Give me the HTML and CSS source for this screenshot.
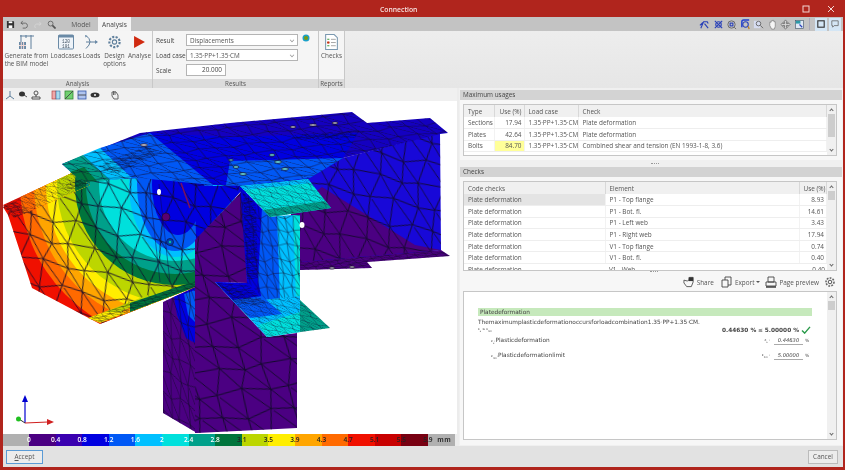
FILE: index.html
```html
<!DOCTYPE html>
<html lang="en">
<head>
<meta charset="utf-8">
<title>Connection</title>
<link rel="stylesheet" href="styles.css">
</head>
<body>
<div class="window">
  <header class="titlebar">
    <span class="title">Connection</span>
    <span class="winbtns">
      <svg class="wb" viewBox="0 0 8 8"><rect x="1" y="1" width="6" height="6" class="ln-w"/></svg>
      <svg class="wb" viewBox="0 0 8 8"><path d="M1 1L7 7M7 1L1 7" class="ln-w"/></svg>
    </span>
  </header>

  <nav class="tabbar">
    <div class="qat">
      <svg class="qi" viewBox="0 0 10 10"><path d="M1 1H8L9 2V9H1Z" class="f-dark"/><rect x="3" y="1.500" width="4" height="2" class="f-white"/><rect x="3" y="6" width="4" height="3" class="f-white"/></svg>
      <svg class="qi" viewBox="0 0 10 10"><path d="M3 1L1 3.500L3.500 5M1.500 3.500H6A2.800 2.800 0 0 1 6 9H3" class="ln-g"/></svg>
      <svg class="qi qi-off" viewBox="0 0 10 10"><path d="M7 2L9 4.500L6.500 6M8.500 4.500H4A2.500 2.500 0 0 0 3 9" class="ln-l"/></svg>
      <svg class="qi" viewBox="0 0 10 10"><circle cx="4" cy="4" r="2.700" class="ln-g"/><path d="M6 6L9.500 9.500" class="ln-g2"/></svg>
    </div>
    <span class="tab tab-model">Model</span>
    <span class="tab tab-active">Analysis</span>
    <div class="viewtools">
      <svg class="vi" viewBox="0 0 12 12"><path d="M2 10L5 3H9L10 5M1 7L4 4M6 5L10 10" class="ln-blue"/></svg>
      <svg class="vi" viewBox="0 0 12 12"><circle cx="6" cy="6" r="3" class="ln-blue"/><path d="M2 2L10 10M10 2L2 10" class="ln-blue"/></svg>
      <svg class="vi" viewBox="0 0 12 12"><circle cx="6" cy="6" r="4" class="ln-g"/><rect x="4.500" y="4.500" width="3" height="3" class="ln-blue"/><path d="M9 9L11 11" class="ln-g"/></svg>
      <svg class="vi" viewBox="0 0 12 12"><path d="M2 9V3A2 2 0 0 1 4 1H10" class="ln-blue2"/><circle cx="6" cy="6" r="3" class="ln-blue"/><path d="M9 8L10 11" class="ln-orange"/></svg>
      <svg class="vi" viewBox="0 0 12 12"><rect x="1" y="2" width="7" height="8" class="f-pale"/><circle cx="6" cy="5" r="2.500" class="ln-g"/><path d="M8 7L11 10" class="ln-g"/></svg>
      <svg class="vi" viewBox="0 0 12 12"><path d="M3 7V3.500H4.500V2H6V1.500H7.500V3H9V8L8 11H5Z" class="hand"/></svg>
      <svg class="vi" viewBox="0 0 12 12"><path d="M6 1L8 3.500H7V5H9V4L11 6L9 8V7H7V9H8L6 11L4 9H5V7H3V8L1 6L3 4V5H5V3.500H4Z" class="f-graystroke"/></svg>
      <svg class="vi" viewBox="0 0 12 12"><rect x="1.500" y="1.500" width="9" height="9" class="f-paleblue"/><rect x="2" y="2" width="5" height="3" class="f-teal"/><path d="M6 6L9 9" class="ln-blue"/></svg>
      <i class="vsep"></i>
      <span class="vbtn"><svg class="vbi" viewBox="0 0 10 10"><rect x="1" y="1" width="8" height="8" class="ln-d2"/></svg></span>
      <span class="vbtn"><svg class="vbi" viewBox="0 0 10 10"><path d="M1 1H9V7H4L2 9V7H1Z" class="ln-g"/></svg></span>
    </div>
  </nav>

  <section class="ribbon">
    <div class="rgroup rg-analysis">
      <div class="rbody">
        <div class="rbtn rb-gen">
          <svg class="ri ri-gen" viewBox="0 0 18 16"><path d="M2 2H16M3 1V15M13 1V15M8 1V4" class="ln-steel"/><rect x="1" y="8" width="7" height="7" class="f-steel"/><path d="M3.300 8V15M5.600 8V15M1 11.500H8" class="ln-w"/></svg>
          <span>Generate from<br>the BIM model</span>
        </div>
        <div class="rbtn rb-lc">
          <svg class="ri ri-lc" viewBox="0 0 16 15"><rect x="0.500" y="0.500" width="15" height="14" rx="1" class="f-calendar"/><rect x="0.500" y="0.500" width="15" height="2.500" class="f-steel"/><text x="8" y="8" class="calnum">120</text><text x="8" y="13" class="calnum">181</text></svg>
          <span>Loadcases</span>
        </div>
        <div class="rbtn rb-loads">
          <svg class="ri ri-loads" viewBox="0 0 15 15"><path d="M2 1Q10 7 2 14M2 7.500H13" class="ln-steel"/><path d="M11 5.500L14 7.500L11 9.500Z" class="f-steel"/><path d="M1 0.500L3.500 1.500L1.500 3Z" class="f-steel"/></svg>
          <span>Loads</span>
        </div>
        <div class="rbtn rb-opt">
          <svg class="ri ri-opt" viewBox="0 0 14 14"><circle cx="7" cy="7" r="4.800" class="gear"/><circle cx="7" cy="7" r="2" class="ln-steel"/></svg>
          <span>Design<br>options</span>
        </div>
        <div class="rbtn rb-an">
          <svg class="ri ri-an" viewBox="0 0 10 11"><path d="M0 0L10 5.500L0 11Z" class="f-red"/></svg>
          <span>Analyse</span>
        </div>
      </div>
      <div class="rlabel">Analysis</div>
    </div>
    <div class="rgroup rg-results">
      <div class="rbody rform">
        <div class="frow frow-1">
          <label class="flab">Result</label>
          <span class="select">Displacements<i class="caret caret-box"></i></span>
          <svg class="status" viewBox="0 0 8 8"><circle cx="4" cy="4" r="3.500" class="f-tealb"/><circle cx="4" cy="4" r="2" class="f-yellow"/></svg>
        </div>
        <div class="frow">
          <label class="flab">Load case</label>
          <span class="select">1.35·PP+1.35·CM<i class="caret"></i></span>
        </div>
        <div class="frow">
          <label class="flab">Scale</label>
          <span class="input">20.000</span>
        </div>
      </div>
      <div class="rlabel">Results</div>
    </div>
    <div class="rgroup rg-reports">
      <div class="rbody">
        <div class="rbtn rb-checks">
          <svg class="ri ri-checks" viewBox="0 0 12 15"><path d="M0.500 0.500H8.500L11.500 3.500V14.500H0.500Z" class="f-doc"/><path d="M2 5H4M2 8H4M2 11H4" class="ln-green"/><path d="M5.500 5H10M5.500 8H10M5.500 11H10" class="ln-g3"/><rect x="2" y="7" width="2" height="2" class="f-red"/></svg>
          <span>Checks</span>
        </div>
      </div>
      <div class="rlabel">Reports</div>
    </div>
    <div class="rrest"></div>
  </section>

  <main class="main">
    <div class="leftcol">
      <div class="viewbar">
        <svg class="vb" viewBox="0 0 10 10"><path d="M5 1V6L1 9M5 6L9 9" class="ln-steel"/></svg>
        <svg class="vb" viewBox="0 0 10 10"><ellipse cx="4" cy="4" rx="3" ry="2.500" class="f-dark"/><path d="M6 5L9 7" class="ln-d"/></svg>
        <svg class="vb" viewBox="0 0 10 10"><circle cx="5" cy="3" r="2" class="ln-d"/><path d="M1 7H9V9H1Z" class="ln-d"/><path d="M5 5V7" class="ln-d"/></svg>
        <i class="vbgap"></i>
        <svg class="vb" viewBox="0 0 10 10"><rect x="1" y="1" width="4" height="8" class="f-pink"/><rect x="5" y="1" width="4" height="8" class="f-cyanl"/></svg>
        <svg class="vb" viewBox="0 0 10 10"><rect x="1" y="1" width="8" height="8" class="f-greenl"/><path d="M1 9L9 1" class="ln-d"/></svg>
        <svg class="vb" viewBox="0 0 10 10"><rect x="1" y="1" width="8" height="8" class="f-bluel"/><path d="M1 5H9" class="ln-d"/></svg>
        <svg class="vb" viewBox="0 0 10 10"><ellipse cx="5" cy="5" rx="4.500" ry="2.500" class="f-dark"/><circle cx="5" cy="5" r="1" class="f-white"/></svg>
        <i class="vbgap"></i>
        <svg class="vb" viewBox="0 0 10 10"><path d="M2 2H6L8 5V9H4L2 6Z" class="ln-g"/><path d="M3.500 1V5M5 1V5" class="ln-g"/></svg>
      </div>

      <div class="viewport">
        <svg class="model" viewBox="3 101 452 333" aria-label="Finite element model">
          <defs>
            <path id="tile" d="M-19 -2L0 0L21 4L41 -2L60 0L81 4M-22 20L3 19L24 23L38 20L63 19M-17 42L-2 41L19 38L43 42L58 41L79 38M-19 58L0 60L21 64L41 58L60 60M-2 -19L0 0L3 19L-2 41L0 60L3 79M19 -22L21 4L24 23L19 38L21 64M43 -18L41 -2L38 20L43 42L41 58L38 80M58 -19L60 0L63 19L58 41L60 60M0 0L24 23M21 4L38 20M41 -2L63 19M3 19L19 38M24 23L43 42M38 20L58 41M-2 41L21 64M19 38L41 58M43 42L60 60M-19 -2L3 19M-22 20L-2 41M-17 42L0 60M-2 -19L21 4M19 -22L41 -2M43 -18L60 0"/>
            <pattern id="mWeb" width="60" height="60" patternUnits="userSpaceOnUse" patternTransform="translate(8 6) rotate(12) scale(1.1)"><use href="#tile" class="meshline"/></pattern>
            <pattern id="mColumn" width="60" height="60" patternUnits="userSpaceOnUse" patternTransform="translate(20 10) rotate(-8) scale(1.2)"><use href="#tile" class="meshline"/></pattern>
            <pattern id="mSide" width="60" height="60" patternUnits="userSpaceOnUse" patternTransform="matrix(.45 .25 0 1 0 0)"><use href="#tile" class="meshline"/></pattern>
            <pattern id="mPlate" width="60" height="60" patternUnits="userSpaceOnUse" patternTransform="matrix(.8 -.09 .45 .42 5 2)"><use href="#tile" class="meshline"/></pattern>
            <pattern id="mFine" width="60" height="60" patternUnits="userSpaceOnUse" patternTransform="matrix(.36 -.1 .2 .16 0 0)"><use href="#tile" class="meshlineb"/></pattern>
            <pattern id="mFlange" width="60" height="60" patternUnits="userSpaceOnUse" patternTransform="matrix(.55 .12 .25 .32 0 0)"><use href="#tile" class="meshline"/></pattern>
            <pattern id="mVweb" width="60" height="60" patternUnits="userSpaceOnUse" patternTransform="matrix(.42 0 .08 .72 0 0)"><use href="#tile" class="meshline"/></pattern>
            <clipPath id="cWeb"><polygon points="3,207 72,173 84,182 100,180 140,178 240,186 195,287 100,324 32,288 8,215"/></clipPath>
            <clipPath id="cFl"><polygon points="3,205 72,173 90,185 14,218"/></clipPath>
            <g id="bands">
              <rect x="0" y="100" width="460" height="300" class="c13"/>
              <circle cx="175" cy="185" r="155" class="c12"/>
              <circle cx="175" cy="185" r="141" class="c11"/>
              <circle cx="175" cy="185" r="129" class="c10"/>
              <circle cx="175" cy="185" r="118" class="c9"/>
              <circle cx="175" cy="185" r="100" class="c8"/>
              <circle cx="175" cy="185" r="89" class="c7"/>
              <circle cx="175" cy="185" r="76" class="c6"/>
              <ellipse cx="175" cy="185" rx="46" ry="72" class="c5"/>
              <ellipse cx="175" cy="185" rx="38" ry="66" class="c4"/>
              <ellipse cx="178" cy="185" rx="26" ry="50" class="c3"/>
            </g>
          </defs>

          <!-- right beam, lower flange -->
          <polygon class="c1" points="300,270 372,268 367,262 450,256 441,250 300,258"/>
          <polygon class="mesh-fine" points="300,270 372,268 367,262 450,256 441,250 300,258"/>
          <ellipse class="hole" cx="332" cy="268" rx="3" ry="1"/>
          <ellipse class="hole" cx="352" cy="267" rx="3" ry="1"/>

          <!-- right beam web -->
          <polygon class="c2b" points="240,186 343,158 440,133 441,250 300,262 300,210"/>
          <polygon class="c1" points="322,187 415,245 441,250 300,262 290,210"/>
          <polygon class="mesh-web" points="240,186 343,158 440,133 441,250 300,262 300,210"/>

          <!-- left beam web -->
          <g clip-path="url(#cWeb)"><use href="#bands"/></g>
          <polygon class="c3" points="195,186 246,186 196,240"/>
          <polygon class="mesh-web" points="3,207 72,173 84,182 100,180 140,178 240,186 195,287 100,324 32,288 8,215"/>
          <path class="stiff" d="M149 183L160 282M159 184L170 282"/>
          <path class="stiff2" d="M181 183L190 208"/>

          <ellipse class="hole-w" cx="159" cy="192" rx="2" ry="3"/>
          <circle class="hole-p" cx="166" cy="217" r="4"/>
          <circle class="hole-t" cx="170" cy="242" r="3.500"/>
          <circle class="hole-t2" cx="170" cy="242" r="1.200"/>

          <!-- left beam upper flange -->
          <g clip-path="url(#cFl)"><use href="#bands"/></g>
          <polygon class="mesh-flange" points="3,205 72,173 90,185 14,218"/>
          <polygon class="mesh-fine" points="3,206 14,218 30,212 16,201"/>
          <polygon class="mesh-fine" points="62,186 90,176 90,185 70,190"/>

          <!-- left beam lower flange -->
          <polygon class="c10" points="88,318 115,308 125,313 100,323"/>
          <polygon class="c9" points="105,312 148,295 150,298 120,312"/>
          <polygon class="c8" points="130,303 195,281 195,287 130,312"/>
          <polygon class="mesh-fine" points="88,318 130,303 195,281 195,287 130,312 100,323"/>

          <!-- column -->
          <polygon class="c1" points="163,302 195,287 195,433 197,433 163,413"/>
          <polygon class="c3" points="174,297 195,288 195,343 186,338 177,315"/>
          <polygon class="c4" points="184,294 195,290 195,322 188,315"/>
          <polygon class="mesh-side" points="163,302 195,287 195,433 197,433 163,413"/>
          <polygon class="c1" points="195,240 246,187 247,283 215,282 267,337 297,333 297,428 197,433 195,433"/>
          <polygon class="mesh-col" points="195,240 246,187 247,283 215,282 267,337 297,333 297,428 197,433 195,433"/>

          <!-- top plate -->
          <polygon class="c2" points="62,164 140,133 230,123 352,112 367,123 430,118 448,133 440,134 343,158 310,178 240,186 140,178 100,180 84,182 72,173"/>
          <polygon class="c3" points="150,133 230,137 358,133 343,158 310,178 240,186 213,185"/>
          <polygon class="c4" points="100,148 150,133 213,185 140,178 132,178"/>
          <polygon class="c4" points="230,161 343,158 310,178 240,186 226,185"/>
          <polygon class="c5" points="83,155 100,148 132,178 110,180"/>
          <polygon class="c7" points="62,164 83,155 110,180 84,182 72,173"/>
          <polygon class="c8" points="70,172 84,167 97,181 84,182"/>
          <polygon class="mesh-plate" points="62,164 140,133 230,123 352,112 367,123 430,118 448,133 440,134 343,158 310,178 240,186 140,178 100,180 84,182 72,173"/>
          <polygon class="mesh-fine" points="97,166 145,146 162,152 115,175"/>
          <polygon class="mesh-fine" points="294,135 360,130 355,138 297,140"/>
          <ellipse class="hole" cx="144" cy="145" rx="3.500" ry="1.200"/>
          <ellipse class="hole" cx="293" cy="127" rx="3" ry="1.100"/>
          <ellipse class="hole" cx="313" cy="125" rx="3.500" ry="1.100"/>
          <ellipse class="hole" cx="335" cy="123" rx="3" ry="1.100"/>
          <ellipse class="hole-c" cx="272" cy="155" rx="3" ry="1.200"/>
          <ellipse class="hole-c" cx="278" cy="162" rx="3.500" ry="1.300"/>
          <ellipse class="hole-c" cx="285" cy="169" rx="3.500" ry="1.300"/>
          <ellipse class="hole-c" cx="243" cy="174" rx="3.500" ry="1.300"/>
          <ellipse class="hole-c" cx="236" cy="167" rx="3" ry="1.200"/>
          <ellipse class="hole-c" cx="231" cy="160" rx="2.500" ry="1"/>

          <!-- V1 beam web -->
          <polygon class="c3" points="240,186 270,217 300,215 300,300 262,305 215,282 247,283"/>
          <polygon class="c4" points="262,208 272,217 280,216 280,312 262,300 258,280"/>
          <polygon class="c5" points="277,216 294,215 300,300 300,328 270,320 250,306 280,300"/>
          <polygon class="c6" points="293,215 300,215 300,300 296,300"/>
          <polygon class="mesh-vweb" points="240,186 270,217 300,215 300,300 262,305 215,282 247,283"/>
          <polygon class="mesh-fine" points="243,192 256,205 258,278 247,280"/>
          <ellipse class="hole-w" cx="302" cy="225" rx="2.500" ry="3"/>

          <!-- V1 lower flange -->
          <polygon class="c5" points="215,282 262,300 300,296 300,332 267,337"/>
          <polygon class="c3" points="215,282 250,284 268,304 240,308"/>
          <polygon class="c4" points="232,300 262,296 282,314 250,318"/>
          <polygon class="c6" points="258,325 300,312 300,332 267,337"/>
          <polygon class="c7" points="300,300 330,328 300,332"/>
          <polygon class="mesh-flange" points="215,282 262,300 300,296 300,300 330,328 267,337"/>
          <polygon class="mesh-fine" points="217,283 249,285 266,304 240,307"/>

          <!-- V1 upper flange -->
          <polygon class="c6" points="240,186 308,179 331,208 270,217"/>
          <polygon class="c5" points="240,186 308,179 311,183 244,190"/>
          <polygon class="c7" points="263,210 325,201 331,208 270,217"/>
          <polygon class="mesh-flange" points="240,186 308,179 331,208 270,217"/>

          <!-- axes -->
          <g class="axes">
            <path class="ax-b" d="M25 423V402"/><path class="af-b" d="M25 395L22 402H28Z"/>
            <path class="ax-r" d="M25 423L48 422"/><path class="af-r" d="M54 422L47 419V425Z"/>
            <path class="ax-d" d="M25 423L19 419"/><circle class="af-g" cx="18.500" cy="419" r="2.500"/>
          </g>
        </svg>
      </div>

      <div class="legend">
        <span class="lg-start"></span>
        <span class="lg s1"><b class="lt">0</b></span>
        <span class="lg s2"><b class="lt">0.4</b></span>
        <span class="lg s3"><b class="lt">0.8</b></span>
        <span class="lg s4"><b class="lt">1.2</b></span>
        <span class="lg s5"><b class="lt">1.6</b></span>
        <span class="lg s6"><b class="lt">2</b></span>
        <span class="lg s7"><b class="lt">2.4</b></span>
        <span class="lg s8"><b class="lt">2.8</b></span>
        <span class="lg s9"><b class="lt lt-d">3.1</b></span>
        <span class="lg s10"><b class="lt lt-d">3.5</b></span>
        <span class="lg s11"><b class="lt lt-d">3.9</b></span>
        <span class="lg s12"><b class="lt lt-d">4.3</b></span>
        <span class="lg s13"><b class="lt lt-d">4.7</b></span>
        <span class="lg s14"><b class="lt lt-d">5.1</b></span>
        <span class="lg s15"><b class="lt lt-d">5.5</b></span>
        <span class="lg-end"><b class="lt lt-d">5.9</b><span class="lg-unit">mm</span></span>
      </div>
    </div>

    <aside class="rightcol">
      <div class="phead">Maximum usages</div>
      <div class="pbody pbody-1">
        <div class="tablebox tb-1">
          <table class="grid grid-usage">
            <thead><tr><th class="u1">Type</th><th class="u2 num">Use (%)</th><th class="u3">Load case</th><th>Check</th></tr></thead>
            <tbody>
              <tr><td>Sections</td><td class="num">17.94</td><td>1.35·PP+1.35·CM</td><td>Plate deformation</td></tr>
              <tr><td>Plates</td><td class="num">42.64</td><td>1.35·PP+1.35·CM</td><td>Plate deformation</td></tr>
              <tr><td>Bolts</td><td class="num warn">84.70</td><td>1.35·PP+1.35·CM</td><td>Combined shear and tension (EN 1993-1-8, 3.6)</td></tr>
            </tbody>
          </table>
          <div class="sbar"><i class="sarrow up"></i><i class="thumb thumb-1"></i><i class="sarrow dn"></i></div>
        </div>
      </div>
      <div class="grip"></div>
      <div class="phead">Checks</div>
      <div class="pbody pbody-2">
        <div class="tablebox tb-2">
          <div class="tclip">
          <table class="grid grid-checks">
            <thead><tr><th class="c-a">Code checks</th><th class="c-b">Element</th><th class="num">Use (%)</th></tr></thead>
            <tbody>
              <tr class="sel"><td>Plate deformation</td><td>P1 - Top flange</td><td class="num">8.93</td></tr>
              <tr><td>Plate deformation</td><td>P1 - Bot. fl.</td><td class="num">14.61</td></tr>
              <tr><td>Plate deformation</td><td>P1 - Left web</td><td class="num">3.43</td></tr>
              <tr><td>Plate deformation</td><td>P1 - Right web</td><td class="num">17.94</td></tr>
              <tr><td>Plate deformation</td><td>V1 - Top flange</td><td class="num">0.74</td></tr>
              <tr><td>Plate deformation</td><td>V1 - Bot. fl.</td><td class="num">0.40</td></tr>
            </tbody>
          </table>
          <div class="cutrow"><span class="cut-a">Plate deformation</span><span class="cut-b">V1 - Web</span><span class="cut-c">0.40</span></div>
          </div>
          <div class="sbar"><i class="sarrow up"></i><i class="thumb thumb-2"></i><i class="sarrow dn"></i></div>
        </div>
        <div class="grip grip-2"></div>
        <div class="reportbar">
          <svg class="rpi rpi-share" viewBox="0 0 13 12"><path d="M1 4L5 5L7 3V1H11V6L9 11H4L1 7Z" class="ln-d"/><path d="M6 1H11V5H6Z" class="f-dark"/></svg><span>Share</span>
          <svg class="rpi rpi-exp" viewBox="0 0 12 12"><path d="M4 1H10V9H7M4 1V4M1 4H7V11H1Z" class="ln-d"/></svg><span class="r-exp">Export</span><i class="dd"></i>
          <svg class="rpi rpi-prev" viewBox="0 0 12 12"><path d="M3 1H9V6H3ZM1 6H11V10H1Z" class="ln-d"/><path d="M1 11H11" class="ln-d2"/></svg><span>Page preview</span>
          <svg class="rpi rpi-set" viewBox="0 0 12 12"><circle cx="6" cy="6" r="4" class="gear-d"/><circle cx="6" cy="6" r="1.800" class="ln-d"/></svg>
        </div>
        <div class="tablebox reportbox">
          <div class="report">
            <div class="rp-head">Platedeformation</div>
            <p class="rp-line">Themaximumplasticdeformationoccursforloadcombination1.35·PP+1.35·CM.</p>
            <div class="rp-sum">
              <span class="rp-small">ε<sub>s</sub> ≤ ε<sub>lim</sub></span>
              <span class="rp-val"><b>0.44630 %</b> ≤ <b>5.00000 %</b></span>
              <svg class="tick" viewBox="0 0 11 9"><path d="M1 5L4 8L10 1" class="ln-tick"/></svg>
            </div>
            <div class="rp-row">
              <span class="rp-name"><small>ε<sub>s</sub>:</small>Plasticdeformation</span>
              <span class="rp-sym">ε<sub>s</sub> :</span><span class="rp-num">0.44630</span><span class="rp-pct">%</span>
            </div>
            <div class="rp-row rp-row-2">
              <span class="rp-name"><small>ε<sub>lim</sub>:</small>Plasticdeformationlimit</span>
              <span class="rp-sym">ε<sub>lim</sub> :</span><span class="rp-num">5.00000</span><span class="rp-pct">%</span>
            </div>
          </div>
          <div class="sbar"><i class="sarrow up"></i><i class="thumb thumb-3"></i><i class="sarrow dn"></i></div>
        </div>
      </div>
    </aside>
  </main>

  <footer class="footer">
    <button class="btn btn-primary"><u>A</u>ccept</button>
    <button class="btn">Cancel</button>
  </footer>
</div>
</body>
</html>
```

FILE: styles.css
```css
* { box-sizing: border-box; }
html, body { margin: 0; padding: 0; }
body { width: 845px; height: 470px; overflow: hidden; font-family: "Open Sans", "Noto Sans", "Liberation Sans", sans-serif; font-size: 6.4px; color: #444; }
.window { width: 845px; height: 470px; background: #b0251d; padding: 0 2px 3px 3px; display: flex; flex-direction: column; filter: blur(.3px); }

/* title bar */
.titlebar { height: 17px; flex: none; position: relative; display: flex; align-items: center; justify-content: flex-end; color: #fff; }
.title { position: absolute; left: 377px; top: 5px; font-size: 6.8px; font-weight: 600; color: #f6e2e0; }
.winbtns { display: flex; gap: 17px; padding-right: 8px; }
.wb { width: 8px; height: 8px; }

/* tabs */
.tabbar { height: 14px; flex: none; background: #c3c3c3; display: flex; align-items: stretch; font-size: 6.6px; }
.qat { width: 65px; display: flex; align-items: center; padding-left: 3px; gap: 4.500px; }
.qi { width: 9px; height: 9px; }
.qi-off { opacity: .7; }
.tab { padding: 3px 0 0; text-align: center; color: #555; }
.tab-model { width: 26px; margin-right: 4px; }
.tab-active { width: 33px; background: #f4f4f4; color: #444; }
.viewtools { margin-left: auto; display: flex; align-items: center; gap: 2.500px; padding-right: 2px; }
.vi { width: 11px; height: 11px; }
.vsep { width: 1px; height: 12px; background: #aab; margin: 0 2px; }
.vbtn { width: 12px; height: 13px; background: #d4e6f5; display: flex; align-items: center; justify-content: center; }
.vbi { width: 8px; height: 8px; }

/* ribbon */
.ribbon { height: 57px; flex: none; display: flex; background: #f0f0f0; }
.rgroup { display: flex; flex-direction: column; border-right: 1px solid #c8c8c8; }
.rg-analysis { width: 150px; }
.rg-results { width: 166px; }
.rg-reports { width: 26px; }
.rrest { flex: 1; background: linear-gradient(#ededed, #e6e6e6); }
.rbody { flex: 1; display: flex; min-height: 0; background: #f5f5f5; }
.rlabel { height: 9px; flex: none; background: #dcdcdc; text-align: center; line-height: 9px; font-size: 6.2px; color: #555; }
.rbtn { display: flex; flex-direction: column; align-items: center; text-align: center; line-height: 7.600px; color: #555; padding-top: 3px; white-space: nowrap; }
.rbtn span { display: block; }
.ri { display: block; height: 16px; margin-bottom: 2px; }
.rb-gen { width: 47px; }
.rb-lc { width: 32px; }
.rb-loads { width: 19px; }
.rb-opt { width: 27px; }
.rb-an { width: 23px; }
.ri-gen { width: 18px; }
.ri-lc { width: 16px; }
.ri-loads { width: 15px; }
.ri-opt { width: 15px; }
.ri-an { width: 11px; height: 12px; margin: 2px 0 4px; }
.ri-checks { width: 13px; }
.rb-checks { width: 25px; }

.rform { flex-direction: column; padding: 3px 0 0 3px; gap: 3px; }
.frow { display: flex; align-items: center; height: 12px; position: relative; }
.flab { width: 30px; font-size: 6.4px; color: #444; }
.select { width: 112px; height: 12px; background: #fff; border: 1px solid #b4b4b4; display: flex; align-items: center; padding-left: 3px; font-size: 6.4px; position: relative; color: #555; }
.caret { position: absolute; right: 3px; top: 3px; width: 4px; height: 4px; border-right: 1px solid #999; border-bottom: 1px solid #999; transform: rotate(45deg) scale(.8); }
.input { width: 40px; height: 12px; background: #fff; border: 1px solid #b4b4b4; text-align: right; padding-right: 3px; line-height: 10px; font-size: 6.4px; }
.status { width: 8px; height: 8px; margin-left: 4px; margin-top: -4px; }

/* main */
.main { flex: 1; display: flex; min-height: 0; background: #ececec; }
.leftcol { width: 454px; flex: none; display: flex; flex-direction: column; }
.viewbar { height: 13px; flex: none; display: flex; align-items: center; background: #f0f0f0; padding-left: 2px; gap: 3px; }
.vb { width: 10px; height: 10px; }
.vbgap { width: 4px; }
.viewport { flex: 1; min-height: 0; background: #fff; }
.model { display: block; width: 452px; height: 333px; }

.legend { height: 12px; flex: none; display: flex; background: #b0b0b0; font-size: 6.6px; line-height: 12px; margin-right: 2px; }
.lg-start { width: 26px; flex: none; }
.lg { width: 26.6px; flex: none; position: relative; }
.lt { display: inline-block; font-weight: 600; color: #fff; transform: translateX(-50%); }
.lt-d { color: #222; }
.lg-end { position: relative; flex: 1; display: flex; }
.lg-unit { font-weight: 700; color: #333; letter-spacing: .5px; }

.s1 { background: #4b0082; } .s2 { background: #3a00b0; } .s3 { background: #0000e0; }
.s4 { background: #0058f5; } .s5 { background: #00c0ff; } .s6 { background: #00e0dc; }
.s7 { background: #00a08a; } .s8 { background: #00743c; } .s9 { background: #bcd600; }
.s10 { background: #ffee00; } .s11 { background: #ffa500; } .s12 { background: #ff6a00; }
.s13 { background: #f01000; } .s14 { background: #c80000; } .s15 { background: #780012; }

/* model */
.c1 { fill: #4b0082; } .c2 { fill: #1400c0; } .c2b { fill: #1808d8; } .c3 { fill: #0000e0; } .c4 { fill: #0058f5; }
.c5 { fill: #00c0ff; } .c6 { fill: #00e0dc; } .c7 { fill: #00a08a; } .c8 { fill: #00743c; }
.c9 { fill: #bcd600; } .c10 { fill: #ffee00; } .c11 { fill: #ffa500; } .c12 { fill: #ff6a00; } .c13 { fill: #f01000; }
.meshline { fill: none; stroke: #100828; stroke-width: .8; }
.meshlineb { fill: none; stroke: #0a0620; stroke-width: 1.4; }
.mesh-web { fill: url(#mWeb); }
.mesh-col { fill: url(#mColumn); }
.mesh-side { fill: url(#mSide); }
.mesh-plate { fill: url(#mPlate); }
.mesh-fine { fill: url(#mFine); }
.mesh-flange { fill: url(#mFlange); }
.mesh-vweb { fill: url(#mVweb); }
.stiff { fill: none; stroke: #10084a; stroke-width: .7; opacity: .7; }
.stiff2 { fill: none; stroke: #7a1060; stroke-width: 1.5; }
.hole { fill: #e4e4e4; stroke: #12082a; stroke-width: .8; }
.hole-c { fill: #6fe8e8; stroke: #12082a; stroke-width: .8; }
.hole-w { fill: #fff; }
.hole-p { fill: #5a0070; stroke: #12082a; stroke-width: .6; }
.hole-t { fill: #0040b0; stroke: #12082a; stroke-width: .6; }
.hole-t2 { fill: #00c0a0; }
.ax-b { stroke: #0000d0; stroke-width: 1.2; fill: none; } .af-b { fill: #0000d0; }
.ax-r { stroke: #d02020; stroke-width: 1.2; fill: none; } .af-r { fill: #d02020; }
.ax-d { stroke: #333; stroke-width: 1; fill: none; } .af-g { fill: #20c020; }

/* right column */
.rightcol { flex: 1; min-width: 0; margin-left: 2px; background: #f0f0f0; padding: 2px 1px 0 1px; display: flex; flex-direction: column; }
.phead { height: 10px; flex: none; background: #d3d3d3; line-height: 10px; padding-left: 3px; font-size: 6.4px; color: #444; }
.pbody { background: #f7f7f7; padding: 4px 5px 0 3px; }
.pbody-1 { height: 60px; flex: none; }
.pbody-2 { flex: 1; min-height: 0; padding-bottom: 5px; display: flex; flex-direction: column; margin-bottom: 1px; }
.grip { height: 7px; flex: none; position: relative; }
.grip::after { content: ""; position: absolute; left: 50%; top: 3px; width: 8px; border-top: 1px dotted #999; }
.grip-2 { height: 2px; }
.grip-2::after { top: 0; }
.tablebox { border: 1px solid #c6c6c6; background: #fff; display: flex; min-height: 0; }
.tb-1 { height: 52px; }
.tb-2 { height: 90px; flex: none; }
.tclip { flex: 1; overflow: hidden; min-width: 0; }
.grid { flex: 1; width: 100%; table-layout: fixed; border-collapse: collapse; font-size: 6.4px; color: #555; }
.tb-1 .grid { height: 47px; flex: 1; align-self: flex-start; }
.grid th { height: 12px; background: #f0f0f0; font-weight: 400; text-align: left; padding: 0 2px 0 4px; border-right: 1px solid #d8d8d8; white-space: nowrap; }
.grid td { height: 11.600px; padding: 0 2px 0 4px; border-bottom: 1px solid #eee; border-right: 1px solid #f2f2f2; white-space: nowrap; overflow: hidden; }
.u1 { width: 30px; } .u2 { width: 30px; } .u3 { width: 54px; }
.c-a { width: 141px; } .c-b { width: 194px; }
.grid .num { text-align: right; }
.grid .warn { background: #ffff99; }
.grid .sel td:first-child { background: #e4e4e4; }
.cutrow { display: flex; height: 8px; line-height: 11px; font-size: 6.4px; color: #555; overflow: hidden; padding-left: 4px; }
.cut-a { width: 141px; }
.cut-b { width: 194px; }
.cut-c { flex: 1; text-align: right; padding-right: 2px; }
.sbar { width: 9px; flex: none; background: #f0f0f0; position: relative; display: flex; flex-direction: column; align-items: center; }
.sarrow { width: 3px; height: 3px; border-left: 1px solid #666; border-top: 1px solid #666; transform: rotate(45deg); margin: 4px 0 2px; flex: none; }
.sarrow.dn { transform: rotate(225deg); margin: auto 0 4px; }
.thumb { width: 7px; flex: none; background: #cdcdcd; }
.thumb-1 { height: 23px; }
.thumb-2 { height: 9px; }
.thumb-3 { height: 9px; }

.reportbar { height: 18px; flex: none; display: flex; align-items: center; justify-content: flex-end; font-size: 6.4px; color: #555; padding-right: 1px; gap: 2px; }
.rpi { width: 12px; height: 12px; }
.rpi-exp { margin-left: 5px; }
.rpi-prev { margin-left: 3px; }
.rpi-set { margin-left: 3px; }
.dd { width: 0; height: 0; border: 2px solid transparent; border-top: 2px solid #555; margin-top: 2px; }
.reportbox { flex: 1; }
.report { flex: 1; padding: 16px 15px 0 14px; font-family: "DejaVu Sans", sans-serif; font-size: 5.800px; color: #444; min-width: 0; }
.rp-head { height: 8px; background: #c6e9bc; line-height: 8px; padding-left: 2px; }
.rp-line { margin: 2px 0 0; line-height: 8px; white-space: nowrap; }
.rp-sum { display: flex; align-items: center; height: 8px; }
.rp-small { font-size: 3.400px; }
.rp-small sub { font-size: 2.500px; }
.rp-val { margin-left: auto; margin-right: 2px; font-size: 5.800px; }
.tick { width: 10px; height: 8px; margin-right: 1px; }
.rp-row { display: flex; align-items: center; height: 7px; padding-left: 13px; margin-top: 3px; }
.rp-row-2 { margin-top: 8px; }
.rp-name { flex: 1; }
.rp-name small { font-size: 3.600px; }
.rp-name sub, .rp-sym sub { font-size: 2.500px; }
.rp-sym { font-size: 3.600px; margin-right: 4px; }
.rp-num { width: 29px; text-align: center; font-style: italic; border-bottom: 1px solid #aaa; font-size: 5.200px; line-height: 7px; }
.rp-pct { width: 7px; margin-left: 2px; font-size: 4.500px; }

/* footer */
.footer { height: 21px; flex: none; background: #e2e2e2; display: flex; align-items: center; justify-content: space-between; padding: 0 5px 0 3px; }
.btn { width: 30px; height: 14px; background: #ececec; border: 1px solid #bbb; font: 6.4px "Open Sans", sans-serif; color: #555; padding: 0; }
.btn-primary { width: 37px; border: 1px solid #5b9bd5; }

/* icon fills */
.ln-w { fill: none; stroke: #f3d8d5; stroke-width: 1; }
.ln-g { fill: none; stroke: #666; stroke-width: 1; }
.ln-g2 { fill: none; stroke: #555; stroke-width: 1.8; }
.ln-l { fill: none; stroke: #ddd; stroke-width: 1; }
.ln-d { fill: none; stroke: #444; stroke-width: .9; }
.ln-d2 { fill: none; stroke: #333; stroke-width: 1.4; }
.ln-g3 { fill: none; stroke: #999; stroke-width: .8; }
.ln-green { fill: none; stroke: #3a9b3a; stroke-width: 1; }
.ln-blue { fill: none; stroke: #2840b8; stroke-width: 1.2; }
.ln-blue2 { fill: none; stroke: #2040d0; stroke-width: 1.6; }
.ln-orange { fill: none; stroke: #c08020; stroke-width: 1.4; }
.ln-steel { fill: none; stroke: #5e7f9c; stroke-width: 1; }
.ln-tick { fill: none; stroke: #2a9a4a; stroke-width: 1.600; }
.f-dark { fill: #333; }
.f-white { fill: #fff; }
.f-pale { fill: #d6dcf0; }
.f-steel { fill: #6a8aa6; }
.f-red { fill: #d02a10; }
.f-doc { fill: #fff; stroke: #7a98b0; stroke-width: 1; }
.f-calendar { fill: #eef3f8; stroke: #6a8aa6; stroke-width: 1; }
.f-tealb { fill: #1aa0c8; }
.f-yellow { fill: #7a9a10; }
.f-pink { fill: #f0a8a8; stroke: #a33; stroke-width: .6; }
.f-cyanl { fill: #a8dcef; stroke: #369; stroke-width: .6; }
.f-greenl { fill: #70d070; stroke: #383; stroke-width: .8; }
.f-bluel { fill: #b0c4ee; stroke: #35a; stroke-width: .8; }
.f-graystroke { fill: #d8d8d8; stroke: #555; stroke-width: .7; }
.f-paleblue { fill: #dfe8f5; stroke: #456; stroke-width: .7; }
.f-teal { fill: #2a9aa8; }
.hand { fill: #f5f5f5; stroke: #777; stroke-width: .7; }
.gear { fill: none; stroke: #5e7f9c; stroke-width: 2; stroke-dasharray: 2 1.300; }
.gear-d { fill: none; stroke: #666; stroke-width: 1.600; stroke-dasharray: 1.800 1.200; }
.calnum { font: 4.500px "Liberation Mono", monospace; fill: #456; text-anchor: middle; }
```
